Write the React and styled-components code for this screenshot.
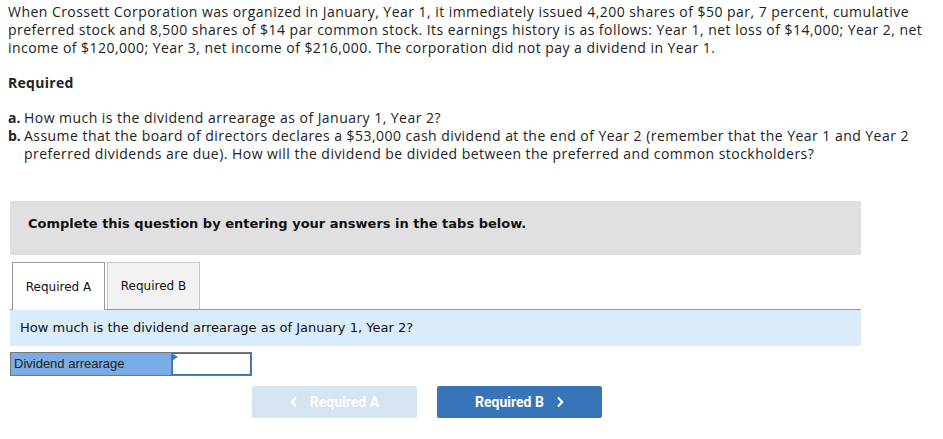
import React from 'react';
import styled, { createGlobalStyle } from 'styled-components';

const Global = createGlobalStyle`
  body {
    margin: 0;
    background: #fff;
  }
`;

const Page = styled.div`
  padding: 3px 8px 0 8px;
  font-family: "Open Sans", Lato, sans-serif;
  font-size: 14px;
  line-height: 18px;
  color: #222;
`;

const Intro = styled.p`
  margin: 0;
  white-space: nowrap;
  letter-spacing: 0.46px;
`;

const Heading = styled.div`
  margin-top: 17px;
  font-weight: bold;
  font-size: 14px;
  letter-spacing: 0.3px;
`;

const Questions = styled.ol`
  list-style: none;
  margin: 17px 0 0 0;
  padding: 0;
  white-space: nowrap;
  letter-spacing: 0.46px;
`;

const Question = styled.li`
  padding-left: 16px;
  text-indent: -16px;
`;

const Letter = styled.b`
  display: inline-block;
  text-indent: 0;
  width: 16px;
  letter-spacing: 0;
`;

const Panel = styled.div`
  margin: 38px 0 0 2px;
  width: 851px;
`;

const Banner = styled.div`
  height: 54px;
  box-sizing: border-box;
  background: #e0e0e0;
  padding: 0 18px 8px 18px;
  display: flex;
  align-items: center;
  font-family: "DejaVu Sans", Verdana, sans-serif;
  font-weight: bold;
  font-size: 13px;
  color: #111;
`;

const TabRow = styled.div`
  display: flex;
  gap: 2px;
  padding: 7px 0 0 2px;
  border-bottom: 1px solid #999;
`;

const Tab = styled.div`
  width: 93px;
  box-sizing: border-box;
  display: flex;
  align-items: center;
  justify-content: center;
  font-family: "DejaVu Sans", Verdana, sans-serif;
  font-size: 12px;
  color: #111;
  background: ${p => (p.$active ? '#fff' : '#f2f2f2')};
  border: 1px solid ${p => (p.$active ? '#999' : '#c8c8c8')};
  border-bottom: none;
  margin-bottom: ${p => (p.$active ? '-1px' : '0')};
  height: ${p => (p.$active ? '48px' : '47px')};
`;

const Prompt = styled.div`
  height: 36px;
  background: #daecfa;
  display: flex;
  align-items: center;
  padding-left: 10px;
  font-family: "DejaVu Sans", Verdana, sans-serif;
  font-size: 13px;
  color: #111;
`;

const AnswerRow = styled.div`
  display: flex;
  margin-top: 6px;
`;

const Label = styled.div`
  width: 161px;
  height: 24px;
  box-sizing: border-box;
  background: #7aade5;
  border: 1px solid #777;
  border-right: none;
  padding-left: 3px;
  display: flex;
  align-items: center;
  font-family: "Liberation Sans", Arial, sans-serif;
  font-size: 13px;
  color: #222;
`;

const InputWrap = styled.div`
  position: relative;
  width: 81px;
  height: 24px;
  box-sizing: border-box;
  border: 1px solid #777;
`;

const Input = styled.input`
  width: 100%;
  height: 100%;
  box-sizing: border-box;
  border: 1px solid #3b6fb0;
  margin: 0;
  padding: 0 4px;
  outline: none;
  background: #fff;
`;

const Flag = styled.span`
  position: absolute;
  top: 1px;
  left: 1px;
  width: 0;
  height: 0;
  border-top: 3px solid transparent;
  border-bottom: 3px solid transparent;
  border-left: 5px solid #3b78c4;
`;

const Nav = styled.div`
  display: flex;
  gap: 20px;
  margin: 10px 0 0 242px;
`;

const NavButton = styled.button`
  width: 165px;
  height: 32px;
  border: none;
  border-radius: 2px;
  display: flex;
  align-items: center;
  justify-content: center;
  gap: 12px;
  font-family: Roboto, sans-serif;
  font-weight: bold;
  font-size: 14px;
  color: #fff;
  background: ${p => (p.$disabled ? '#d6e3f1' : '#3874b8')};
  cursor: ${p => (p.$disabled ? 'default' : 'pointer')};
`;

const Chevron = ({ left }) => (
  <svg width="8" height="12" viewBox="0 0 8 12">
    <path
      d={left ? 'M6 1.5 L1.8 6 L6 10.5' : 'M2 1.5 L6.2 6 L2 10.5'}
      fill="none"
      stroke="#fff"
      strokeWidth="2.2"
    />
  </svg>
);

export default function App() {
  return (
    <Page>
      <Global />
      <Intro>
        When Crossett Corporation was organized in January, Year 1, it immediately issued 4,200 shares of $50 par, 7 percent, cumulative<br />
        preferred stock and 8,500 shares of $14 par common stock. Its earnings history is as follows: Year 1, net loss of $14,000; Year 2, net<br />
        income of $120,000; Year 3, net income of $216,000. The corporation did not pay a dividend in Year 1.
      </Intro>
      <Heading>Required</Heading>
      <Questions>
        <Question><Letter>a.</Letter>How much is the dividend arrearage as of January 1, Year 2?</Question>
        <Question>
          <Letter>b.</Letter>Assume that the board of directors declares a $53,000 cash dividend at the end of Year 2 (remember that the Year 1 and Year 2<br />
          preferred dividends are due). How will the dividend be divided between the preferred and common stockholders?
        </Question>
      </Questions>
      <Panel>
        <Banner>Complete this question by entering your answers in the tabs below.</Banner>
        <TabRow>
          <Tab $active>Required A</Tab>
          <Tab>Required B</Tab>
        </TabRow>
        <Prompt>How much is the dividend arrearage as of January 1, Year 2?</Prompt>
        <AnswerRow>
          <Label>Dividend arrearage</Label>
          <InputWrap>
            <Input type="text" />
            <Flag />
          </InputWrap>
        </AnswerRow>
        <Nav>
          <NavButton $disabled><Chevron left /> Required A</NavButton>
          <NavButton>Required B <Chevron /></NavButton>
        </Nav>
      </Panel>
    </Page>
  );
}
